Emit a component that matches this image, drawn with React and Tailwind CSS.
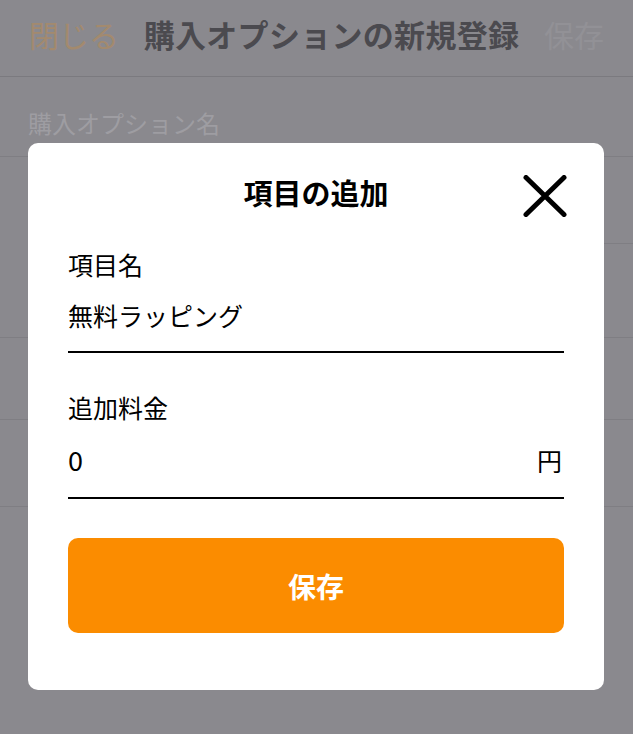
import React from "react";

const font = { fontFamily: '"Noto Sans CJK JP", "Noto Sans", sans-serif' };

function CloseIcon() {
  return (
    <svg width="44" height="42" viewBox="0 0 44 42" fill="none">
      <path d="M3 2.5L41 39.5M41 2.5L3 39.5" stroke="#000" strokeWidth="5" strokeLinecap="round" />
    </svg>
  );
}

function Field({ label, value, suffix, gap, pb, valueSize = "text-[25px]" }) {
  return (
    <div className="flex flex-col">
      <div className="text-[25px] leading-[34px] text-black">{label}</div>
      <div className={`flex items-center justify-between border-b-2 border-black ${gap} ${pb}`}>
        <span className={`${valueSize} leading-[34px] text-black`}>{value}</span>
        {suffix && <span className="text-[25px] leading-[34px] text-black pr-[2px]">{suffix}</span>}
      </div>
    </div>
  );
}

export default function App() {
  return (
    <div className="relative w-[633px] h-[734px] overflow-hidden bg-[#8a898e]" style={font}>
      {/* Background page (dimmed) */}
      <div className="flex items-center justify-between h-[77px] px-[29px] pb-[8px] border-b border-[#7b7a7f]">
        <span className="text-[30px] text-[#a38a6e]">閉じる</span>
        <span className="text-[31px] font-bold text-[#4b4a4f] tracking-[0.3px]">購入オプションの新規登録</span>
        <span className="text-[30px] text-[#929196]">保存</span>
      </div>
      <div className="h-[80px] flex items-center px-[28px] pt-[12px] border-b border-[#7f7e83]">
        <span className="text-[24px] text-[#9e9da2]">購入オプション名</span>
      </div>
      <div className="h-[87px] border-b border-[#7f7e83] ml-[560px]" />
      <div className="h-[94px] border-b border-[#7f7e83]" />
      <div className="h-[82px] border-b border-[#7f7e83]" />
      <div className="h-[87px] border-b border-[#7f7e83]" />

      {/* Modal */}
      <div className="absolute left-[28px] top-[143px] w-[576px] h-[547px] bg-white rounded-[10px] px-[40px] pt-[28px]">
        <div className="relative flex items-center justify-center h-[44px]">
          <span className="text-[29px] font-bold text-black">項目の追加</span>
          <div className="absolute right-[-3px] top-[4px]">
            <CloseIcon />
          </div>
        </div>
        <div className="mt-[32px]">
          <Field label="項目名" value="無料ラッピング" gap="mt-[17px]" pb="pb-[19px]" />
        </div>
        <div className="mt-[37px]">
          <Field label="追加料金" value="0" suffix="円" gap="mt-[19px]" pb="pb-[20px]" valueSize="text-[27px]" />
        </div>
        <button className="mt-[39px] w-full h-[95px] rounded-[10px] bg-[#fb8c00] text-white text-[28px] font-bold">
          保存
        </button>
      </div>
    </div>
  );
}
